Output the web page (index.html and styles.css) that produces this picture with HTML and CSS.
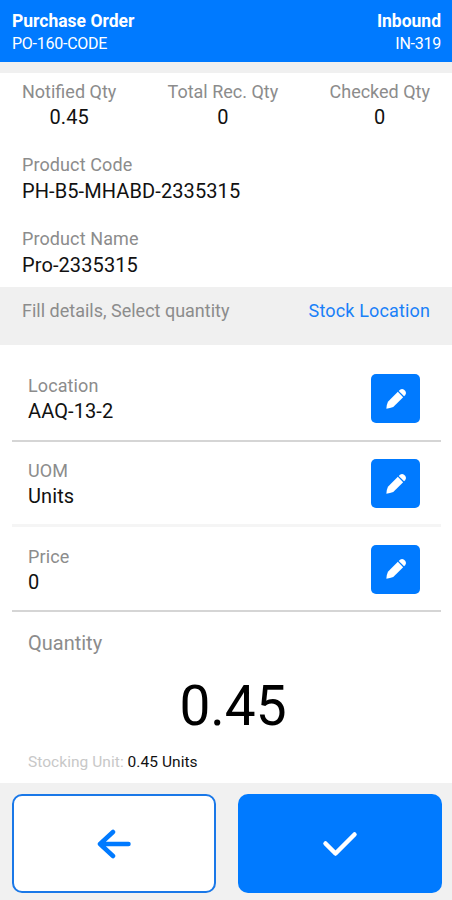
FILE: index.html
```html
<!DOCTYPE html>
<html lang="en">
<head>
<meta charset="utf-8">
<title>Purchase Order</title>
<link rel="stylesheet" href="styles.css">
</head>
<body>
<svg width="0" height="0" class="defs">
  <symbol id="pencil" viewBox="0 0 24 24">
    <path d="M1.500 22.500Q1.600 18.500 3.200 15L14 4.200 19.800 10 9 20.800Q5.500 22.400 1.500 22.500Z"/>
    <path d="M15 3.200 16.400 1.800Q18.600 .200 20.800 1.800L22.200 3.200Q23.800 5.400 22.200 7.600L20.800 9Z"/>
  </symbol>
</svg>
<div class="screen">
  <header class="header">
    <div><h1 class="title">Purchase Order</h1><div class="code">PO-160-CODE</div></div>
    <div class="header-end"><h2 class="title">Inbound</h2><div class="code">IN-319</div></div>
  </header>
  <section class="summary">
    <div class="counts">
      <div class="count"><div class="label">Notified Qty</div><div class="value">0.45</div></div>
      <div class="count"><div class="label">Total Rec. Qty</div><div class="value">0</div></div>
      <div class="count"><div class="label">Checked Qty</div><div class="value">0</div></div>
    </div>
    <div class="product"><div class="label">Product Code</div><div class="value">PH-B5-MHABD-2335315</div></div>
    <div class="product"><div class="label">Product Name</div><div class="value">Pro-2335315</div></div>
  </section>
  <div class="hint"><span class="hint-text">Fill details, Select quantity</span><a class="link">Stock Location</a></div>
  <main class="details">
    <div class="row">
      <div><div class="label">Location</div><div class="value">AAQ-13-2</div></div>
      <button class="edit" aria-label="Edit location"><svg><use href="#pencil"/></svg></button>
    </div>
    <div class="row row-light">
      <div><div class="label">UOM</div><div class="value">Units</div></div>
      <button class="edit" aria-label="Edit unit"><svg><use href="#pencil"/></svg></button>
    </div>
    <div class="row">
      <div><div class="label">Price</div><div class="value">0</div></div>
      <button class="edit" aria-label="Edit price"><svg><use href="#pencil"/></svg></button>
    </div>
    <div class="quantity">
      <div class="quantity-label">Quantity</div>
      <div class="amount">0.45</div>
      <div class="stock"><span class="stock-label">Stocking Unit:</span> 0.45 Units</div>
    </div>
  </main>
  <footer class="actions">
    <button class="action back" aria-label="Back"><svg width="36" height="30" viewBox="0 0 36 30"><path d="M32.500 15H4M17 3 4 15 17 27"/></svg></button>
    <button class="action confirm" aria-label="Confirm"><svg width="36" height="26" viewBox="0 0 36 26"><path d="M3.500 12.500 13.500 22.500 32.500 3.500"/></svg></button>
  </footer>
</div>
</body>
</html>
```
FILE: styles.css
```css
* { box-sizing: border-box; }
body { margin: 0; font-family: Roboto, "Liberation Sans", sans-serif; color: #111; background: #fff; }
button { padding: 0; border: 0; display: flex; align-items: center; justify-content: center; }
.defs { position: absolute; }
.screen { height: 900px; display: flex; flex-direction: column; overflow: hidden; }
.header { height: 62px; flex: none; background: #007aff; color: #fff; display: flex; justify-content: space-between; padding: 9px 11px 0 12px; }
.header-end { text-align: right; }
.title { margin: 0; font-size: 17.500px; line-height: 24px; font-weight: 700; }
.code { font-size: 16px; line-height: 22px; letter-spacing: -.25px; }
.summary { height: 225px; flex: none; border-top: 11px solid #f0f0f0; padding: 6px 22px 0; }
.counts { display: flex; justify-content: space-between; margin-bottom: 22px; }
.count { text-align: center; }
.label { font-size: 18px; line-height: 26px; color: #8c8c8c; letter-spacing: .1px; }
.count .label { letter-spacing: 0; }
.value { font-size: 20px; line-height: 26px; letter-spacing: .1px; }
.count .value { line-height: 25px; }
.product { margin-bottom: 21.500px; }
.hint { height: 58px; flex: none; background: #f0f0f0; display: flex; justify-content: space-between; padding: 11px 22px 0; font-size: 18px; line-height: 26px; }
.hint-text { color: #8c8c8c; }
.link { color: #1a80f8; letter-spacing: .15px; }
.details { height: 438px; flex: none; padding: 11px 11px 0 12px; }
.row { height: 85px; display: flex; align-items: center; justify-content: space-between; padding: 1px 21px 0 16px; border-bottom: 2px solid #d5d5d5; }
.row:first-child { height: 86px; }
.row-light { height: 85px; border-bottom: 3px solid #f5f5f5; }
.row .value { line-height: 25px; }
.edit { width: 49px; height: 49px; border-radius: 5px; background: #007aff; }
.edit svg { width: 22px; height: 22px; fill: #fff; }
.quantity { padding: 17px 16px 0; }
.quantity-label { font-size: 20px; line-height: 28px; color: #8c8c8c; }
.amount { font-size: 55px; line-height: 64px; margin-top: 17px; padding-left: 13px; text-align: center; color: #000; }
.stock { font-size: 15.500px; line-height: 22px; margin-top: 13px; letter-spacing: .05px; }
.stock-label { color: #c8c8c8; }
.actions { flex: 1; background: #f1f1f1; display: grid; grid-template-columns: 1fr 1fr; gap: 22px; padding: 11px 10px 6px 12px; }
.action { height: 99px; border-radius: 10px; }
.action svg { fill: none; stroke-width: 4.500; stroke-linecap: round; stroke-linejoin: round; }
.back { background: #fff; border: 2px solid #1a78e8; }
.back svg { stroke: #007aff; }
.confirm { background: #007aff; }
.confirm svg { stroke: #fff; }
```
